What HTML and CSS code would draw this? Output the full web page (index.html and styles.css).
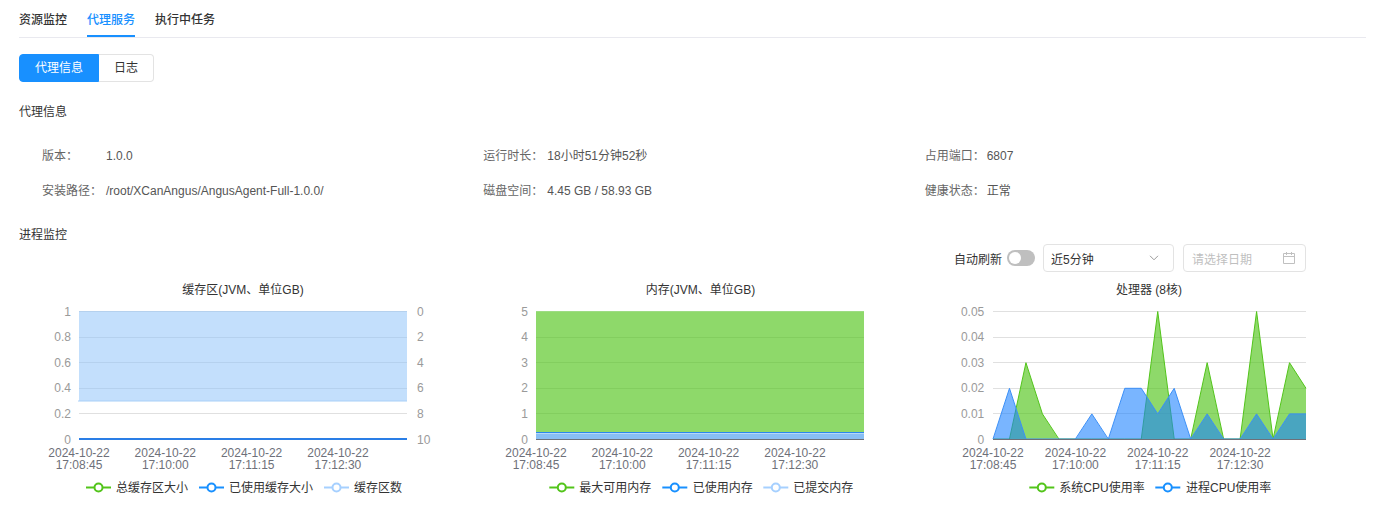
FILE: index.html
```html
<!DOCTYPE html>
<html lang="zh">
<head>
<meta charset="utf-8">
<title>代理服务</title>
<link rel="stylesheet" href="styles.css">
</head>
<body>
<div class="page">
  <div class="tabs">
    <div class="tab">资源监控</div>
    <div class="tab active">代理服务</div>
    <div class="tab">执行中任务</div>
  </div>

  <div class="btn-group">
    <button class="seg seg-active">代理信息</button><button class="seg">日志</button>
  </div>

  <div class="section-title first">代理信息</div>
  <div class="info-grid">
    <div class="info-item"><span class="label">版本：</span><span class="value">1.0.0</span></div>
    <div class="info-item"><span class="label">运行时长：</span><span class="value">18小时51分钟52秒</span></div>
    <div class="info-item"><span class="label narrow">占用端口：</span><span class="value">6807</span></div>
    <div class="info-item"><span class="label">安装路径：</span><span class="value">/root/XCanAngus/AngusAgent-Full-1.0.0/</span></div>
    <div class="info-item"><span class="label">磁盘空间：</span><span class="value">4.45 GB / 58.93 GB</span></div>
    <div class="info-item"><span class="label narrow">健康状态：</span><span class="value">正常</span></div>
  </div>

  <div class="section-title">进程监控</div>
  <div class="toolbar">
    <span class="tb-label">自动刷新</span>
    <span class="switch"><span class="knob"></span></span>
    <div class="select">
      <span>近5分钟</span>
      <svg class="chev" width="10" height="6" viewBox="0 0 10 6"><path d="M1 0.8 L5 4.8 L9 0.8"/></svg>
    </div>
    <div class="date">
      <span class="placeholder">请选择日期</span>
      <svg class="cal" width="12" height="12" viewBox="0 0 12 12"><path d="M0.5 1.5 H11.5 V11.5 H0.5 Z M0.5 4.5 H11.5 M3.5 0 V3 M8.5 0 V3"/></svg>
    </div>
  </div>

  <div class="charts">
    <!-- Chart 1 -->
    <svg class="chart" width="449" height="232" viewBox="0 0 449 232">
      <text class="c-title" x="224" y="14">缓存区(JVM、单位GB)</text>
      <line class="grid" x1="60" x2="388" y1="35.5" y2="35.5"/>
      <line class="grid" x1="60" x2="388" y1="61.5" y2="61.5"/>
      <line class="grid" x1="60" x2="388" y1="86.5" y2="86.5"/>
      <line class="grid" x1="60" x2="388" y1="112.5" y2="112.5"/>
      <line class="grid" x1="60" x2="388" y1="137.5" y2="137.5"/>
      <rect class="fill-light" x="60" y="35" width="328" height="90"/>
      <line class="ln-light" x1="59" x2="388" y1="125" y2="125"/>
      <line class="axis" x1="60" x2="388" y1="163.5" y2="163.5"/>
      <line class="ln-green" x1="60" x2="388" y1="163" y2="163"/>
      <line class="ln-blue2" x1="60" x2="388" y1="163" y2="163"/>
      <text class="ylab end" x="52" y="35.5">1</text>
      <text class="ylab end" x="52" y="61.1">0.8</text>
      <text class="ylab end" x="52" y="86.7">0.6</text>
      <text class="ylab end" x="52" y="112.3">0.4</text>
      <text class="ylab end" x="52" y="137.9">0.2</text>
      <text class="ylab end" x="52" y="163.5">0</text>
      <text class="ylab" x="398" y="35.5">0</text>
      <text class="ylab" x="398" y="61.1">2</text>
      <text class="ylab" x="398" y="86.7">4</text>
      <text class="ylab" x="398" y="112.3">6</text>
      <text class="ylab" x="398" y="137.9">8</text>
      <text class="ylab" x="398" y="163.5">10</text>
      <text class="xlab" x="60" y="177">2024-10-22</text><text class="xlab" x="60" y="188.5">17:08:45</text>
      <text class="xlab" x="146.3" y="177">2024-10-22</text><text class="xlab" x="146.3" y="188.5">17:10:00</text>
      <text class="xlab" x="232.6" y="177">2024-10-22</text><text class="xlab" x="232.6" y="188.5">17:11:15</text>
      <text class="xlab" x="318.9" y="177">2024-10-22</text><text class="xlab" x="318.9" y="188.5">17:12:30</text>
      <g class="lg-green"><line x1="67" x2="92" y1="211.5" y2="211.5"/><circle cx="79.5" cy="211.5" r="4"/></g>
      <text class="lg-text" x="97" y="211.5">总缓存区大小</text>
      <g class="lg-blue"><line x1="180" x2="205" y1="211.5" y2="211.5"/><circle cx="192.5" cy="211.5" r="4"/></g>
      <text class="lg-text" x="210" y="211.5">已使用缓存大小</text>
      <g class="lg-light"><line x1="305" x2="330" y1="211.5" y2="211.5"/><circle cx="317.5" cy="211.5" r="4"/></g>
      <text class="lg-text" x="335" y="211.5">缓存区数</text>
    </svg>

    <!-- Chart 2 -->
    <svg class="chart" width="449" height="232" viewBox="0 0 449 232">
      <text class="c-title" x="232.5" y="14">内存(JVM、单位GB)</text>
      <line class="grid" x1="68" x2="396" y1="35.5" y2="35.5"/>
      <line class="grid" x1="68" x2="396" y1="61.5" y2="61.5"/>
      <line class="grid" x1="68" x2="396" y1="86.5" y2="86.5"/>
      <line class="grid" x1="68" x2="396" y1="112.5" y2="112.5"/>
      <line class="grid" x1="68" x2="396" y1="137.5" y2="137.5"/>
      <rect class="area-green" x="68" y="35.5" width="328" height="128"/>
      <line class="ln-green-top" x1="68" x2="396" y1="35.5" y2="35.5"/>
      <rect class="fill-band" x="68" y="156.5" width="328" height="7"/>
      <line class="ln-band" x1="68" x2="396" y1="156.5" y2="156.5"/>
      <line class="ln-band-light" x1="68" x2="396" y1="157.5" y2="157.5"/>
      <line class="axis" x1="68" x2="396" y1="163.5" y2="163.5"/>
      <text class="ylab end" x="60" y="35.5">5</text>
      <text class="ylab end" x="60" y="61.1">4</text>
      <text class="ylab end" x="60" y="86.7">3</text>
      <text class="ylab end" x="60" y="112.3">2</text>
      <text class="ylab end" x="60" y="137.9">1</text>
      <text class="ylab end" x="60" y="163.5">0</text>
      <text class="xlab" x="68" y="177">2024-10-22</text><text class="xlab" x="68" y="188.5">17:08:45</text>
      <text class="xlab" x="154.3" y="177">2024-10-22</text><text class="xlab" x="154.3" y="188.5">17:10:00</text>
      <text class="xlab" x="240.6" y="177">2024-10-22</text><text class="xlab" x="240.6" y="188.5">17:11:15</text>
      <text class="xlab" x="326.9" y="177">2024-10-22</text><text class="xlab" x="326.9" y="188.5">17:12:30</text>
      <g class="lg-green"><line x1="81.3" x2="106.3" y1="211.5" y2="211.5"/><circle cx="93.8" cy="211.5" r="4"/></g>
      <text class="lg-text" x="111.3" y="211.5">最大可用内存</text>
      <g class="lg-blue"><line x1="194.3" x2="219.3" y1="211.5" y2="211.5"/><circle cx="206.8" cy="211.5" r="4"/></g>
      <text class="lg-text" x="224.7" y="211.5">已使用内存</text>
      <g class="lg-light"><line x1="295.3" x2="320.3" y1="211.5" y2="211.5"/><circle cx="307.8" cy="211.5" r="4"/></g>
      <text class="lg-text" x="325.3" y="211.5">已提交内存</text>
    </svg>

    <!-- Chart 3 -->
    <svg class="chart" width="449" height="232" viewBox="0 0 449 232">
      <text class="c-title" x="232" y="14">处理器 (8核)</text>
      <line class="grid" x1="76" x2="389" y1="35.5" y2="35.5"/>
      <line class="grid" x1="76" x2="389" y1="61.5" y2="61.5"/>
      <line class="grid" x1="76" x2="389" y1="86.5" y2="86.5"/>
      <line class="grid" x1="76" x2="389" y1="112.5" y2="112.5"/>
      <line class="grid" x1="76" x2="389" y1="137.5" y2="137.5"/>
      <polygon class="area-green" points="76,163.5 92.47,163.5 108.95,86.7 125.42,137.9 141.9,163.5 158.37,163.5 174.84,163.5 191.32,163.5 207.79,163.5 224.27,163.5 240.74,35.5 257.21,163.5 273.69,163.5 290.16,86.7 306.64,163.5 323.11,163.5 339.58,35.5 356.06,163.5 372.53,86.7 389,112.3 389,163.5"/>
      <polyline class="ln-green" points="76,163 92.47,163 108.95,86.7 125.42,137.9 141.9,163 158.37,163 174.84,163 191.32,163 207.79,163 224.27,163 240.74,35.5 257.21,163 273.69,163 290.16,86.7 306.64,163 323.11,163 339.58,35.5 356.06,163 372.53,86.7 389,112.3"/>
      <polygon class="area-blue" points="76,163.5 92.47,112.3 108.95,163.5 125.42,163.5 141.9,163.5 158.37,163.5 174.84,137.9 191.32,163.5 207.79,112.3 224.27,112.3 240.74,137.9 257.21,112.3 273.69,163.5 290.16,137.9 306.64,163.5 323.11,163.5 339.58,137.9 356.06,163.5 372.53,137.9 389,137.9 389,163.5"/>
      <polyline class="ln-blue" points="76,163 92.47,112.3 108.95,163 125.42,163 141.9,163 158.37,163 174.84,137.9 191.32,163 207.79,112.3 224.27,112.3 240.74,137.9 257.21,112.3 273.69,163 290.16,137.9 306.64,163 323.11,163 339.58,137.9 356.06,163 372.53,137.9 389,137.9"/>
      <line class="axis" x1="76" x2="389" y1="163.5" y2="163.5"/>
      <text class="ylab end" x="67.3" y="35.5">0.05</text>
      <text class="ylab end" x="67.3" y="61.1">0.04</text>
      <text class="ylab end" x="67.3" y="86.7">0.03</text>
      <text class="ylab end" x="67.3" y="112.3">0.02</text>
      <text class="ylab end" x="67.3" y="137.9">0.01</text>
      <text class="ylab end" x="67.3" y="163.5">0</text>
      <text class="xlab" x="76" y="177">2024-10-22</text><text class="xlab" x="76" y="188.5">17:08:45</text>
      <text class="xlab" x="158.4" y="177">2024-10-22</text><text class="xlab" x="158.4" y="188.5">17:10:00</text>
      <text class="xlab" x="240.7" y="177">2024-10-22</text><text class="xlab" x="240.7" y="188.5">17:11:15</text>
      <text class="xlab" x="323.1" y="177">2024-10-22</text><text class="xlab" x="323.1" y="188.5">17:12:30</text>
      <g class="lg-green"><line x1="112.3" x2="137.3" y1="211.5" y2="211.5"/><circle cx="124.8" cy="211.5" r="4"/></g>
      <text class="lg-text" x="142.3" y="211.5">系统CPU使用率</text>
      <g class="lg-blue"><line x1="238.3" x2="263.3" y1="211.5" y2="211.5"/><circle cx="250.8" cy="211.5" r="4"/></g>
      <text class="lg-text" x="269" y="211.5">进程CPU使用率</text>
    </svg>
  </div>
</div>
</body>
</html>
```

FILE: styles.css
```css
html, body {
  margin: 0;
  background: #ffffff;
}

body {
  font-family: "Liberation Sans", "Noto Sans CJK SC", sans-serif;
  font-size: 12px;
  color: #333333;
}

.page {
  padding: 0 34px 0 19px;
}

/* Tabs */
.tabs {
  display: flex;
  gap: 20px;
  height: 37px;
  border-bottom: 1px solid #e9e9ef;
}

.tab {
  box-sizing: border-box;
  height: 37px;
  padding-top: 12px;
  line-height: 17px;
  color: #333333;
  font-weight: 500;
  border-bottom: 2px solid transparent;
}

.tab.active {
  color: #1890ff;
  border-bottom-color: #1890ff;
}

/* Segmented buttons */
.btn-group {
  display: flex;
  margin-top: 16px;
}

.seg {
  height: 28px;
  padding: 0 15px;
  border: 1px solid #e3e3e3;
  background: #ffffff;
  font: inherit;
  color: #333333;
  line-height: 26px;
  cursor: pointer;
}

.seg + .seg {
  border-left: none;
}

.seg:first-child {
  border-radius: 4px 0 0 4px;
}

.seg:last-child {
  border-radius: 0 4px 4px 0;
}

.seg-active {
  background: #1890ff;
  border-color: #1890ff;
  color: #ffffff;
}

/* Section titles */
.section-title {
  line-height: 18px;
  color: #333333;
  margin-top: 25px;
}

.section-title.first {
  margin-top: 21px;
}

/* Info grid */
.info-grid {
  display: grid;
  grid-template-columns: repeat(3, 1fr);
  row-gap: 15px;
  padding-left: 23px;
  margin-top: 25px;
  line-height: 20px;
}

.info-item {
  display: flex;
}

.label {
  width: 64px;
  flex: none;
  color: #666666;
}

.label.narrow {
  width: 62px;
}

.value {
  color: #555555;
}

/* Toolbar */
.toolbar {
  display: flex;
  justify-content: flex-end;
  align-items: center;
  height: 28px;
  padding-right: 60px;
}

.tb-label {
  color: #333333;
}

.switch {
  position: relative;
  box-sizing: border-box;
  width: 28px;
  height: 16px;
  margin-left: 5px;
  border-radius: 8px;
  background: #bfbfbf;
}

.knob {
  position: absolute;
  top: 2px;
  left: 2px;
  width: 12px;
  height: 12px;
  border-radius: 50%;
  background: #ffffff;
}

.select {
  box-sizing: border-box;
  display: flex;
  align-items: center;
  justify-content: space-between;
  width: 131px;
  height: 28px;
  margin-left: 8px;
  padding: 0 14px 0 7px;
  border: 1px solid #e3e3e3;
  border-radius: 4px;
  color: #333333;
}

.chev path {
  fill: none;
  stroke: #9a9a9a;
  stroke-width: 1;
}

.date {
  box-sizing: border-box;
  display: flex;
  align-items: center;
  justify-content: space-between;
  width: 123px;
  height: 28px;
  margin-left: 9px;
  padding: 0 10px 0 8px;
  border: 1px solid #e3e3e3;
  border-radius: 4px;
}

.placeholder {
  color: #bfbfbf;
}

.cal path {
  fill: none;
  stroke: #c0c0c0;
  stroke-width: 1;
}

/* Charts */
.charts {
  display: flex;
  margin-top: 4px;
}

.chart {
  display: block;
  flex: none;
  font-family: "Liberation Sans", "Noto Sans CJK SC", sans-serif;
}

.c-title {
  font-size: 12px;
  fill: #333333;
  text-anchor: middle;
  dominant-baseline: central;
}

.grid {
  stroke: #e0e0e0;
  stroke-width: 1;
}

.axis {
  stroke: #6e7079;
  stroke-width: 1;
}

.ylab {
  font-size: 12px;
  fill: #9a9a9a;
  dominant-baseline: central;
}

.ylab.end {
  text-anchor: end;
}

.xlab {
  font-size: 12px;
  fill: #6e7079;
  text-anchor: middle;
  dominant-baseline: central;
}

.fill-light {
  fill: rgba(145, 196, 250, 0.55);
}

.ln-light {
  stroke: #a8cff8;
  stroke-width: 1;
}

.ln-green {
  fill: none;
  stroke: #52c41a;
  stroke-width: 1;
}

.ln-blue2 {
  stroke: #2a7ee6;
  stroke-width: 2;
}

.area-green {
  fill: rgba(82, 196, 26, 0.65);
}

.ln-green-top {
  stroke: #9ddc83;
  stroke-width: 1;
}

.area-blue {
  fill: rgba(24, 128, 255, 0.58);
}

.ln-blue {
  fill: none;
  stroke: #3b8ff7;
  stroke-width: 1;
}

.fill-band {
  fill: #88bef4;
}

.ln-band {
  stroke: #2a86ee;
  stroke-width: 1;
}

.ln-band-light {
  stroke: #b7d7f7;
  stroke-width: 1;
}

.lg-green line, .lg-green circle {
  stroke: #52c41a;
  stroke-width: 2;
}

.lg-blue line, .lg-blue circle {
  stroke: #1890ff;
  stroke-width: 2;
}

.lg-light line, .lg-light circle {
  stroke: #a6d0ff;
  stroke-width: 2;
}

.lg-green circle, .lg-blue circle, .lg-light circle {
  fill: #ffffff;
}

.lg-text {
  font-size: 12px;
  fill: #333333;
  dominant-baseline: central;
}
```
